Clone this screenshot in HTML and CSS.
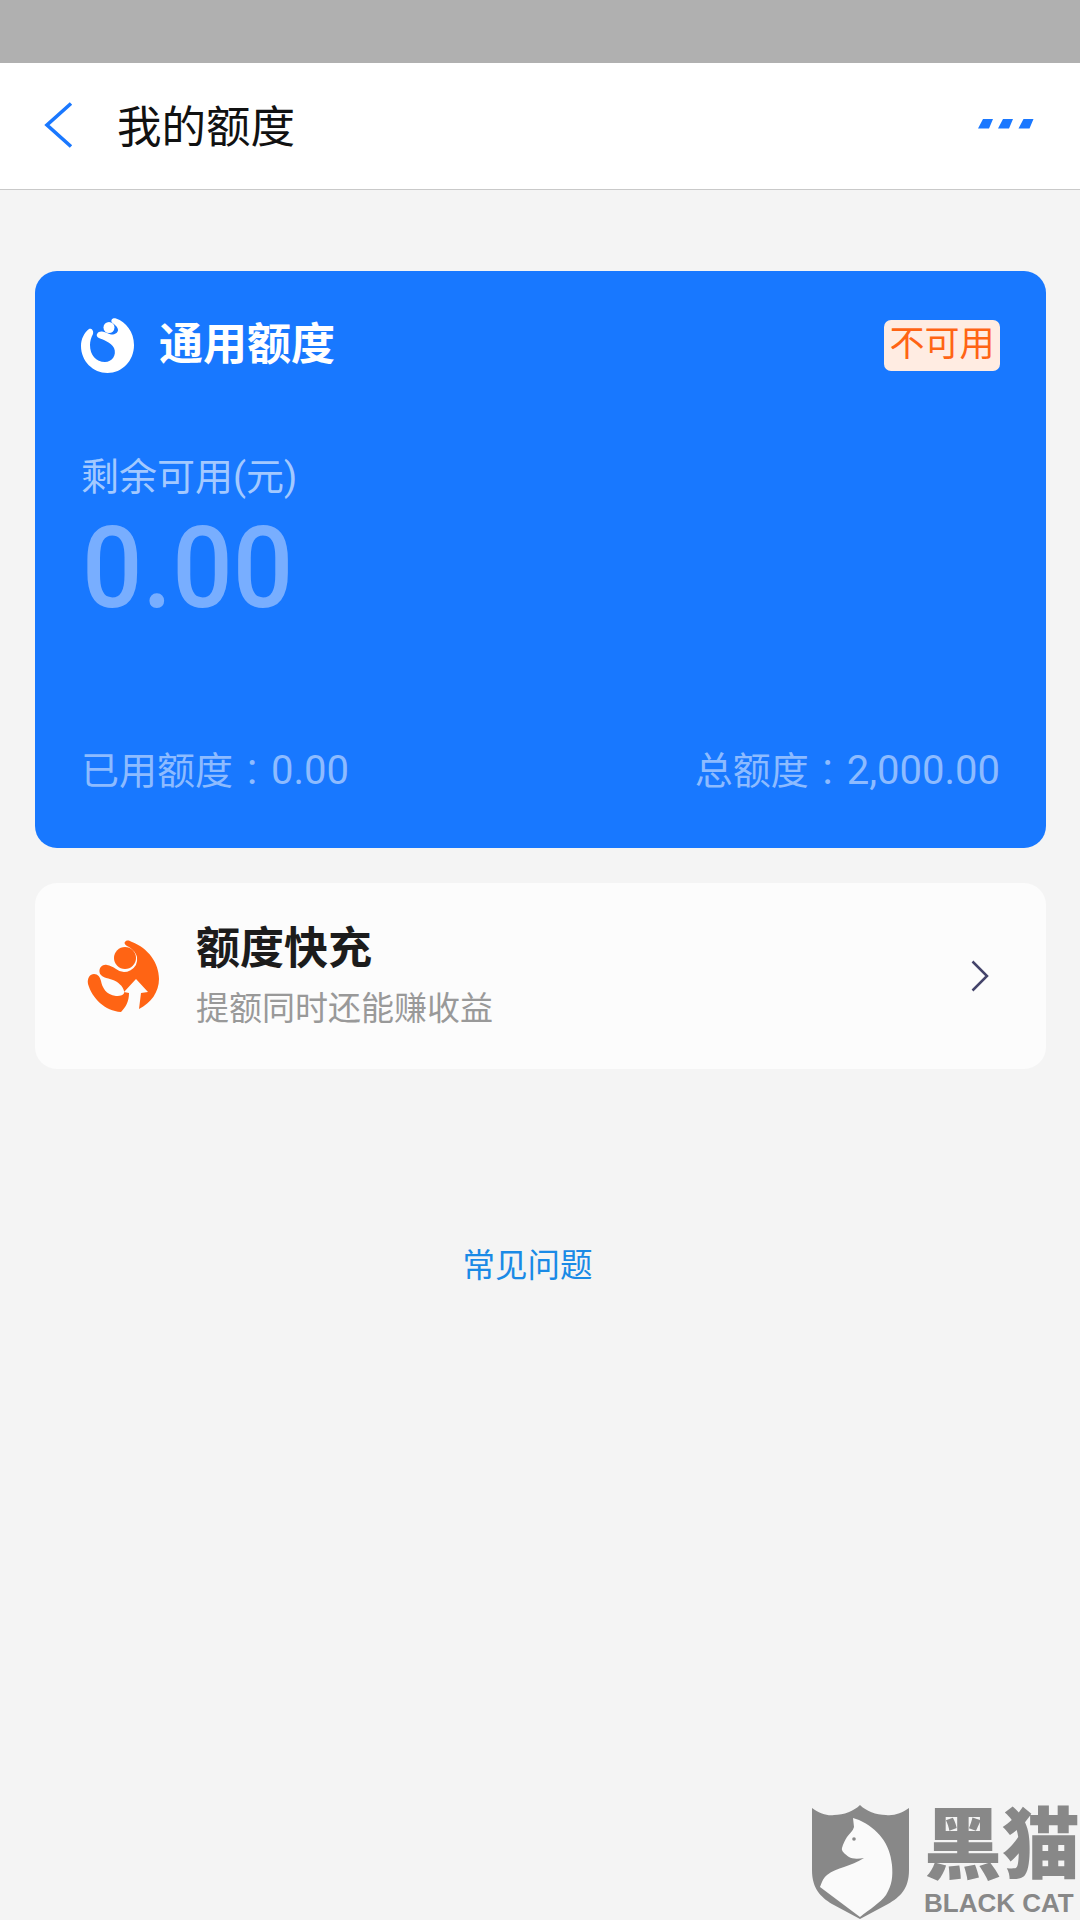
FILE: index.html
```html
<!DOCTYPE html>
<html lang="zh">
<head>
  <meta charset="UTF-8" />
  <meta name="viewport" content="width=device-width, initial-scale=1.0" />
  <title>我的额度</title>
  <link rel="stylesheet" href="styles.css">
</head>
<body>
  <div class="status-bar"></div>

  <header class="nav">
    <svg class="back" width="30" height="46" viewBox="0 0 30 46">
      <path d="M27 1.500 L3 23 L27 44.500" fill="none" stroke="#1a78ff" stroke-width="3.600"/>
    </svg>
    <h1 class="nav-title">我的额度</h1>
    <svg class="more" width="56" height="10" viewBox="0 0 56 10">
      <path d="M5 0H15L11 9.500H0Z M25 0H35L31 9.500H20Z M45.500 0H55.500L51.500 9.500H40.500Z" fill="#1a78ff"/>
    </svg>
  </header>

  <main class="content">
    <section class="card">
      <div class="card-head">
        <svg class="card-logo" width="54" height="56" viewBox="0 0 54 56">
          <path fill="#fff" d="M8 12C3 16 0 22 0 29C0 44 12 56 26.500 56C41 56 53 44 53 28C53 15 45 5 35 1.500C32 .5 29 3 31 5.500C34 8 37 10 37 13C37 16 33 18 30 17.500C27 17 24 14.500 21 14.500C17 14 14 18 17 20.500C22 23 30 25 33 31C36 38 31 45 24 45C15 45 9 38 9 28C9 24 10 21 12 17C13 13 10 11 8 12Z"/>
          <circle cx="28" cy="10.500" r="5.500" fill="#fff"/>
        </svg>
        <span class="card-title">通用额度</span>
        <span class="badge">不可用</span>
      </div>
      <div class="remain-label">剩余可用(元)</div>
      <div class="remain-value">0.00</div>
      <div class="card-foot">
        <span>已用额度<span class="colon">:</span><span class="num">0.00</span></span>
        <span>总额度<span class="colon">:</span><span class="num">2,000.00</span></span>
      </div>
    </section>

    <section class="boost">
      <svg class="boost-logo" width="72" height="74" viewBox="0 0 72 74">
        <path fill="#ff6414" d="M39 2C41 1 43 2 45 3C61 9 72 24 72 40C72 53 64 64 52 70L54 54L61 53L49 40L37 53L42 54C42 62 39 68 34 73C18 72 5 59 1 45C0 39 3 35 7 35C11 35 13 38 14 42C15 48 19 56 29 57C34 57 38 56 37 52C36 47 31 43 26 41C20 39 13 38 12.500 33C12 28 16 25 20 26C23 26.500 26 28 29 30A13 13 0 0 0 50 18C49 13 44 9 40 7C37 5 37 3 39 2Z"/>
        <circle cx="38" cy="19" r="11" fill="#ff6414"/>
      </svg>
      <div class="boost-text">
        <div class="boost-title">额度快充</div>
        <div class="boost-sub">提额同时还能赚收益</div>
      </div>
      <svg class="arrow" width="18" height="32" viewBox="0 0 18 32">
        <path d="M1.500 1.500L16 16L1.500 30.500" fill="none" stroke="#44446a" stroke-width="2.500"/>
      </svg>
    </section>

    <a class="faq">常见问题</a>
  </main>

  <div class="watermark">
    <svg class="shield" width="98" height="115" viewBox="0 0 98 115">
      <path fill="#888" d="M0 3C8 9 16 11 22 10C32 10 42 6 48 0C54 6 64 10 74 10C82 11 90 8 97 3V65C97 84 88 92 76 99L48 114L20 99C9 92 0 84 0 65Z"/>
      <path fill="#fafafa" d="M41 13L47 15C66 24 78 38 80 60C81 72 80 80 74 90C68 98 58 104 48 112L8 82C10 76 12 72 15 70C20 66 26 64 32 62C38 60 46 57 52 53C46 54 40 54 37 52C33 49 29 46 30 43C31 39 33 35 35 32C38 28 41 26 42 22Z"/>
      <circle cx="42" cy="34" r="1.800" fill="#888"/>
    </svg>
    <div class="wm-text">
      <div class="wm-cn">黑猫</div>
      <div class="wm-en">BLACK CAT</div>
    </div>
  </div>
</body>
</html>
```

FILE: styles.css
```css
* {
  box-sizing: border-box;
}
html, body {
  margin: 0;
  padding: 0;
}
body {
  width: 1080px;
  height: 1920px;
  position: relative;
  overflow: hidden;
  background: #f4f4f4;
  font-family: "Roboto", "Noto Sans CJK SC", sans-serif;
}
.status-bar {
  height: 63px;
  background: #b0b0b0;
}
.nav {
  height: 127px;
  display: flex;
  align-items: center;
  padding: 0 46px 2px 44px;
  background: #fff;
  border-bottom: 1px solid #c9c9c9;
}
.nav-title {
  margin: 0 0 4px 43px;
  font-size: 44.500px;
  font-weight: 400;
  color: #111;
  flex: 1;
}
.more {
  margin-bottom: 2px;
}
.content {
  padding: 81px 34px 0 35px;
  display: flex;
  flex-direction: column;
}
.card {
  height: 577px;
  padding: 46px 46px 0;
  border-radius: 22px;
  background: #1878ff;
  display: flex;
  flex-direction: column;
}
.card-head {
  display: flex;
  align-items: center;
  height: 56px;
}
.card-logo {
  margin-right: 24px;
}
.card-title {
  flex: 1;
  margin-bottom: 8px;
  font-size: 44px;
  font-weight: 700;
  color: #fff;
}
.badge {
  width: 116px;
  height: 51px;
  line-height: 49px;
  text-align: center;
  align-self: flex-start;
  margin-top: 3px;
  border-radius: 7px;
  background: #ffece2;
  color: #ff6414;
  font-size: 35px;
}
.remain-label {
  margin-top: 78px;
  font-size: 38px;
  line-height: 52px;
  color: #a3c9ff;
}
.remain-value {
  margin-left: 1px;
  font-size: 114px;
  line-height: 130px;
  font-weight: 500;
  color: #78aeff;
  transform: scaleX(0.935);
  transform-origin: left center;
}
.card-foot {
  margin-top: auto;
  margin-bottom: 51px;
  display: flex;
  justify-content: space-between;
  font-size: 38px;
  line-height: 52px;
  color: #8dbbff;
}
.colon {
  display: inline-block;
  width: 38px;
  text-align: center;
  font-size: 44px;
  line-height: 44px;
}
.num {
  font-size: 40px;
}
.boost {
  height: 186px;
  margin-top: 35px;
  padding: 0 57px 0 52px;
  display: flex;
  align-items: center;
  border-radius: 22px;
  background: #fcfcfc;
}
.boost-text {
  flex: 1;
  margin-left: 37px;
}
.boost-title {
  font-size: 44px;
  line-height: 62px;
  font-weight: 700;
  color: #1c1c1c;
}
.boost-sub {
  margin-top: 4px;
  font-size: 33px;
  line-height: 50px;
  color: #999;
}
.faq {
  margin-top: 174px;
  padding-right: 26px;
  text-align: center;
  font-size: 32.500px;
  line-height: 46px;
  color: #1a8ae6;
}
.watermark {
  position: absolute;
  left: 812px;
  top: 1805px;
  display: flex;
  gap: 14px;
}
.wm-text {
  width: 154px;
  color: #888;
}
.wm-cn {
  font-size: 78px;
  line-height: 84px;
  font-weight: 900;
  white-space: nowrap;
}
.wm-en {
  font-family: "Liberation Sans", sans-serif;
  font-size: 26px;
  line-height: 28px;
  font-weight: 700;
  white-space: nowrap;
}
```
